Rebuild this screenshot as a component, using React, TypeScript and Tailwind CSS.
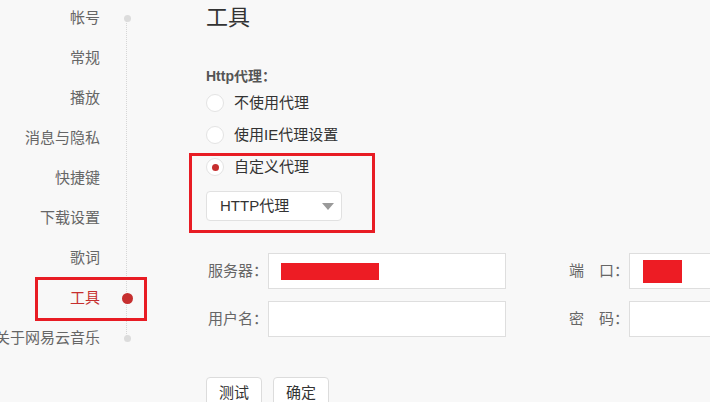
import React from 'react';

const FONT = { fontFamily: '"Liberation Sans", "Noto Sans CJK SC", sans-serif' };

type NavItem = { label: string; dot?: 'gray' | 'red'; active?: boolean };

const NAV: NavItem[] = [
  { label: '帐号', dot: 'gray' },
  { label: '常规' },
  { label: '播放' },
  { label: '消息与隐私' },
  { label: '快捷键' },
  { label: '下载设置' },
  { label: '歌词' },
  { label: '工具', dot: 'red', active: true },
  { label: '关于网易云音乐', dot: 'gray' },
];

function Sidebar() {
  return (
    <div className="relative w-[206px] shrink-0 -mt-[2px]">
      {/* dotted timeline */}
      <div className="absolute left-[126px] top-[22px] h-[318px] border-l border-dotted border-[#d6d6d6]" />
      {NAV.map((item) => (
        <div key={item.label} className="flex h-10 items-center">
          <div className="flex w-[100px] shrink-0 justify-end">
            <span
              className={`whitespace-nowrap text-[15px] leading-5 ${
                item.active ? 'text-[#c62f2f]' : 'text-[#666]'
              }`}
            >
              {item.label}
            </span>
          </div>
          <div className="relative flex w-[53px] shrink-0 justify-center pl-[1px]">
            {item.dot === 'gray' && <span className="block h-[7px] w-[7px] rounded-full bg-[#dcdcdc]" />}
            {item.dot === 'red' && <span className="block h-[11px] w-[11px] rounded-full bg-[#c62f2f]" />}
          </div>
        </div>
      ))}
      {/* annotation box */}
      <div className="absolute left-[35px] top-[279px] h-[44px] w-[112px] border-[3px] border-[#e81c24]" />
    </div>
  );
}

function Radio({ label, checked }: { label: string; checked?: boolean }) {
  return (
    <div className="flex h-8 items-center">
      <span className="flex h-[18px] w-[18px] items-center justify-center rounded-full border border-[#e3e3e3] bg-white">
        {checked && <span className="block h-[7px] w-[7px] rounded-full bg-[#c62f2f]" />}
      </span>
      <span className="ml-[10px] text-[15px] leading-5 text-[#333]">{label}</span>
    </div>
  );
}

function Field({ label, width, children }: { label: string; width: string; children?: React.ReactNode }) {
  return (
    <div className="flex items-center">
      <span className={`${width} shrink-0 whitespace-nowrap text-[15px] leading-5 text-[#666]`}>{label}</span>
      {children}
    </div>
  );
}

export default function App() {
  return (
    <div className="relative flex h-[402px] w-[710px] overflow-hidden bg-[#f8f8f8]" style={FONT}>
      <Sidebar />
      <div className="relative flex-1 pt-[3px]">
        <h1 className="text-[22px] leading-[30px] text-[#333]">工具</h1>

        <div className="mt-[33px] text-[14px] font-bold leading-5 text-[#555]">Http代理：</div>
        <div className="mt-[1px]">
          <Radio label="不使用代理" />
          <Radio label="使用IE代理设置" />
          <Radio label="自定义代理" checked />
        </div>

        <div className="mt-2 flex h-[30px] w-[136px] items-center justify-between rounded-[4px] border border-[#e1e1e1] bg-white pl-[13px] pr-[7px]">
          <span className="text-[15px] leading-5 text-[#333]">HTTP代理</span>
          <span className="h-0 w-0 border-x-[6px] border-t-[7px] border-x-transparent border-t-[#9a9a9a]" />
        </div>

        {/* annotation box */}
        <div className="absolute left-[-17px] top-[153px] h-[80px] w-[186px] border-[3px] border-[#e81c24]" />

        <div className="mt-8 flex flex-col gap-3 pl-[2px]">
          <div className="flex">
            <Field label="服务器：" width="w-[60px]">
              <div className="flex h-[36px] w-[238px] items-center border border-[#dedede] bg-white pl-[12px]">
                <span className="block h-[17px] w-[98px] bg-[#ed1c24]" />
              </div>
            </Field>
            <div className="ml-[63px]">
              <Field label={'端\u2003口：'} width="w-[60px]">
                <div className="flex h-[36px] w-[120px] items-center border border-[#dedede] bg-white pl-[13px]">
                  <span className="block h-[23px] w-[39px] bg-[#ed1c24]" />
                </div>
              </Field>
            </div>
          </div>
          <div className="flex">
            <Field label="用户名：" width="w-[60px]">
              <div className="h-[36px] w-[238px] border border-[#dedede] bg-white" />
            </Field>
            <div className="ml-[63px]">
              <Field label={'密\u2003码：'} width="w-[60px]">
                <div className="h-[36px] w-[120px] border border-[#dedede] bg-white" />
              </Field>
            </div>
          </div>
        </div>

        <div className="mt-10 flex gap-[11px]">
          <button className="h-[32px] w-[56px] rounded-[4px] border border-[#dcdcdc] bg-white text-[15px] leading-5 text-[#333]">
            测试
          </button>
          <button className="h-[32px] w-[56px] rounded-[4px] border border-[#dcdcdc] bg-white text-[15px] leading-5 text-[#333]">
            确定
          </button>
        </div>
      </div>
    </div>
  );
}
